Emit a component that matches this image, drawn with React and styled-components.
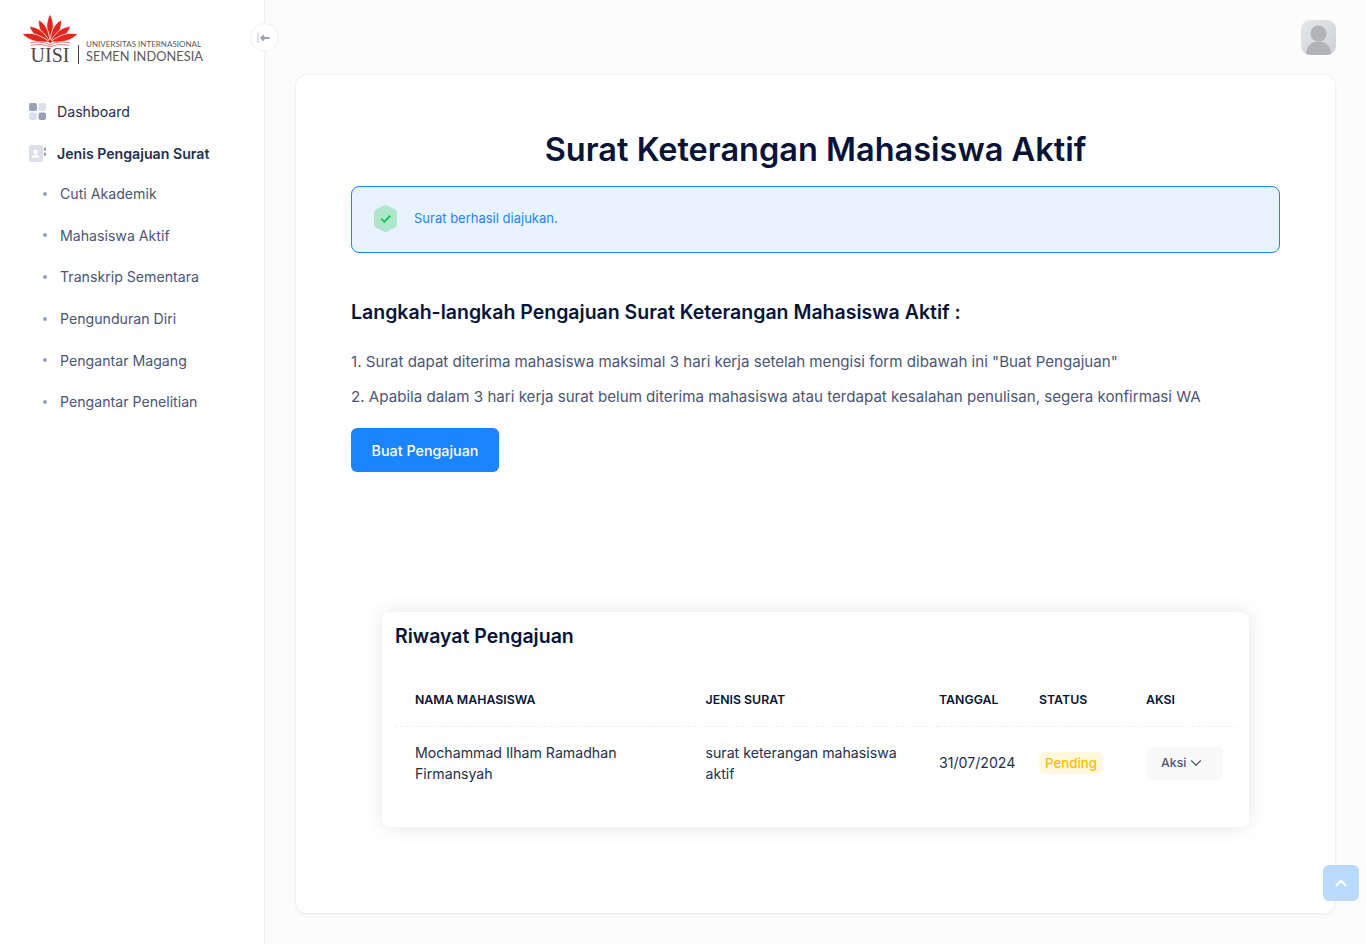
import React from "react"
import styled, { createGlobalStyle } from "styled-components"
import { ChevronDown, ChevronUp } from "lucide-react"

const GlobalStyle = createGlobalStyle`
  * { box-sizing: border-box; }
  html, body { margin: 0; padding: 0; }
  body {
    font-family: Inter, "Liberation Sans", sans-serif;
    background: #fcfcfc;
    color: #071437;
    overflow: hidden;
  }
`

const Page = styled.div`
  display: flex;
  height: 944px;
`

const Sidebar = styled.aside`
  position: relative;
  flex: 0 0 265px;
  background: #fff;
  border-right: 1px solid #f1f1f4;
`

const LogoWrap = styled.div`
  display: flex;
  align-items: flex-end;
  height: 74px;
  padding: 14px 0 10px 22px;
`

const LogoMark = styled.div`
  display: flex;
  flex-direction: column;
  align-items: center;
  width: 56px;
`

const LogoInitials = styled.span`
  font-family: "Liberation Serif", serif;
  font-size: 20px;
  line-height: 17px;
  color: #4b4b4b;
  margin-top: 0;
`

const LogoDivider = styled.span`
  width: 1px;
  height: 19px;
  margin: 0 7px 0 0;
  background: #444;
`

const LogoText = styled.div`
  display: flex;
  flex-direction: column;
  font-family: Lato, sans-serif;
  color: #5a5a5a;
  white-space: nowrap;
`

const LogoSmall = styled.span`
  font-size: 8px;
  line-height: 9px;
  letter-spacing: 0.02px;
`

const LogoBig = styled.span`
  font-size: 12.8px;
  line-height: 15px;
  letter-spacing: 0.05px;
`

const Toggle = styled.button`
  position: absolute;
  top: 23px;
  left: 250px;
  width: 29px;
  height: 29px;
  padding: 0;
  display: flex;
  align-items: center;
  justify-content: center;
  background: #fff;
  border: 1px solid #f1f1f4;
  border-radius: 50%;
`

const Nav = styled.nav`
  display: flex;
  flex-direction: column;
  padding-top: 16px;
`

const NavItem = styled.div`
  display: flex;
  align-items: center;
  gap: 11px;
  height: 42px;
  padding-left: 29px;
  font-size: 14.15px;
  font-weight: ${(p) => (p.$active ? 600 : 400)};
  color: ${(p) => (p.$active ? "#252f4a" : "#252f4a")};
`

const SubItem = styled.div`
  display: flex;
  align-items: center;
  height: 41.6px;
  padding-left: 43px;
  font-size: 14.15px;
  color: #4b5675;
  &::before {
    content: "";
    width: 4px;
    height: 4px;
    margin-right: 13px;
    border-radius: 50%;
    background: #99a1b7;
  }
`

const SubList = styled.div`
  display: flex;
  flex-direction: column;
  margin-top: -1px;
`

const Main = styled.main`
  flex: 1;
  display: flex;
  flex-direction: column;
  padding: 0 30px 30px;
  min-width: 0;
`

const Header = styled.header`
  display: flex;
  justify-content: flex-end;
  align-items: flex-start;
  height: 74px;
  padding-top: 20px;
`

const Avatar = styled.div`
  width: 35px;
  height: 35px;
  border-radius: 9px;
  overflow: hidden;
  background: linear-gradient(135deg, #e6e7e9, #cfd0d3);
`

const Card = styled.section`
  flex: 1;
  background: #fff;
  border: 1px solid #f1f1f4;
  border-radius: 12px;
  box-shadow: 0 3px 4px rgba(0, 0, 0, 0.03);
  padding: 0 55px;
`

const Title = styled.h1`
  margin: 54px 0 15px;
  font-size: 32.5px;
  line-height: 42px;
  font-weight: 600;
  text-align: center;
  color: #071437;
`

const Alert = styled.div`
  display: flex;
  align-items: center;
  gap: 17px;
  height: 67px;
  padding: 0 0 3px 22px;
  background: #e9f3ff;
  border: 1px solid #1b84ff;
  border-radius: 8px;
  font-size: 13px;
  color: #1b84ff;
`

const Heading = styled.h3`
  margin: 46px 0 0;
  font-size: 19.5px;
  line-height: 26px;
  font-weight: 600;
  color: #071437;
`

const Step = styled.p`
  margin: ${(p) => (p.$first ? "26px" : "13px")} 0 0;
  font-size: 15.12px;
  line-height: 22px;
  color: #4b5675;
`

const PrimaryButton = styled.button`
  display: block;
  margin-top: 20px;
  width: 148px;
  height: 44px;
  background: #1b84ff;
  color: #fff;
  border: 0;
  border-radius: 6px;
  font: 500 14.3px Inter, sans-serif;
`

const HistoryCard = styled.div`
  margin: 140px 31px 0;
  height: 215px;
  padding: 0 13px;
  background: #fff;
  border-radius: 8px;
  box-shadow: 0 0 20px rgba(0, 0, 0, 0.1);
`

const HistoryTitle = styled.h4`
  margin: 0;
  padding-top: 11px;
  font-size: 19.5px;
  line-height: 26px;
  font-weight: 600;
  color: #071437;
`

const Table = styled.table`
  width: 841px;
  margin-top: 24px;
  border-collapse: collapse;
  table-layout: fixed;
`

const Th = styled.th`
  width: ${(p) => p.$w}px;
  height: 53px;
  padding: 0 0 0 ${(p) => p.$pad || 0}px;
  text-align: left;
  font-size: 12.35px;
  font-weight: 600;
  text-transform: uppercase;
  color: #071437;
  border-bottom: 1px dashed #f1f1f4;
`

const Td = styled.td`
  padding: 15px ${(p) => p.$padRight || 0}px 15px ${(p) => p.$pad || 0}px;
  font-size: 14.15px;
  line-height: 21px;
  vertical-align: middle;
  color: #252f4a;
`

const Badge = styled.span`
  display: inline-block;
  padding: 0 6px;
  height: 22px;
  line-height: 22px;
  background: #fff8dd;
  border-radius: 6px;
  color: #f6c000;
  font-size: 13.3px;
  font-weight: 500;
`

const ActionButton = styled.div`
  display: flex;
  align-items: center;
  gap: 1px;
  width: 77px;
  height: 34px;
  padding-left: 15px;
  background: #f9f9f9;
  border-radius: 6px;
  font-size: 12.35px;
  font-weight: 500;
  color: #4b5675;
`

const ScrollTop = styled.div`
  position: fixed;
  right: 7px;
  bottom: 43px;
  width: 36px;
  height: 36px;
  display: flex;
  align-items: center;
  justify-content: center;
  background: #bbdaff;
  border-radius: 6px;
  color: #fff;
`

// angle in degrees, length and width of one lotus petal, base at 28,28
const petals = [
  [0, 28, 8.5],
  [-27, 25, 9],
  [27, 25, 9],
  [-53, 26, 9.5],
  [53, 26, 9.5],
  [-74, 29, 9],
  [74, 29, 9],
]

const FlowerLogo = () => (
  <svg width="56" height="33" viewBox="0 0 56 33">
    {petals.map(([a, l, w]) => (
      <path
        key={a}
        d={`M28 28 C${28 - w / 2} ${28 - l * 0.45} ${28 - w / 2} ${28 - l * 0.7} 28 ${28 - l} C${28 + w / 2} ${28 - l * 0.7} ${28 + w / 2} ${28 - l * 0.45} 28 28Z`}
        fill="#e1261c"
        stroke="#fff"
        strokeWidth="0.7"
        transform={`rotate(${a} 28 28)`}
      />
    ))}
    <path d="M26 27.500 28 25l2 2.500-2 2z" fill="#e1261c" />
    <path d="M8 29 Q20 26 28 31 Q36 26 48 29" fill="none" stroke="#ea7d76" strokeWidth="1" />
    <path d="M9 31.500 Q20 29 28 33 Q36 29 47 31.500" fill="none" stroke="#ea7d76" strokeWidth="1" />
  </svg>
)

const CollapseIcon = () => (
  <svg width="16" height="14" viewBox="0 0 16 14" fill="none">
    <path d="M1 2v10" stroke="#c4cada" strokeWidth="1.2" />
    <path d="M12.500 7H4.500M7 4.500 4.200 7 7 9.500" stroke="#99a1b7" strokeWidth="1.8" />
  </svg>
)

const DashboardIcon = () => (
  <svg width="17" height="17" viewBox="0 0 17 17" style={{ flexShrink: 0 }}>
    <rect x="0" y="0" width="8" height="8" rx="2" fill="#99a1b7" />
    <rect x="9.5" y="0" width="7.500" height="8" rx="2" fill="#dbdfe9" />
    <rect x="0" y="9.5" width="8" height="7.500" rx="2" fill="#dbdfe9" />
    <rect x="9.5" y="9.5" width="7.500" height="7.500" rx="2" fill="#99a1b7" />
  </svg>
)

const ContactIcon = () => (
  <svg width="17" height="17" viewBox="0 0 17 17" style={{ flexShrink: 0 }}>
    <rect x="0" y="0" width="14" height="17" rx="2.500" fill="#dbdfe9" />
    <circle cx="6.500" cy="6.800" r="2.200" fill="#fff" />
    <path d="M2.800 12.800c0-2.200 1.700-3.200 3.700-3.200s3.700 1 3.700 3.200z" fill="#fff" />
    <rect x="14.800" y="2.500" width="2.200" height="3.600" rx="1" fill="#99a1b7" />
    <rect x="14.800" y="7.400" width="2.200" height="3.600" rx="1" fill="#99a1b7" />
  </svg>
)

const ShieldIcon = () => (
  <svg width="23" height="29" viewBox="0 0 24 29" style={{ flexShrink: 0 }}>
    <path
      d="M10.400.8 1.600 5.300C.6 5.800 0 6.800 0 7.900v13.200c0 1.100.6 2.100 1.600 2.600l8.800 4.500c1 .5 2.200.5 3.200 0l8.800-4.500c1-.5 1.600-1.500 1.600-2.600V7.900c0-1.100-.6-2.100-1.600-2.600L13.600.8c-1-.5-2.200-.5-3.200 0z"
      fill="#aee6cb"
    />
    <path d="M7.500 14.600 10.800 18l6-6.400" fill="none" stroke="#17c653" strokeWidth="2" />
  </svg>
)

const AvatarIcon = () => (
  <svg width="35" height="35" viewBox="0 0 35 35">
    <circle cx="17.500" cy="13.500" r="8" fill="#b2b3b6" />
    <path d="M5 35c0-9 5-13.500 12.500-13.500S30 26 30 35z" fill="#b2b3b6" />
  </svg>
)

const subItems = [
  "Cuti Akademik",
  "Mahasiswa Aktif",
  "Transkrip Sementara",
  "Pengunduran Diri",
  "Pengantar Magang",
  "Pengantar Penelitian",
]

const App = () => {
  return (
    <Page>
      <GlobalStyle />
      <Sidebar>
        <LogoWrap>
          <LogoMark>
            <FlowerLogo />
            <LogoInitials>UISI</LogoInitials>
          </LogoMark>
          <LogoDivider />
          <LogoText>
            <LogoSmall>UNIVERSITAS INTERNASIONAL</LogoSmall>
            <LogoBig>SEMEN INDONESIA</LogoBig>
          </LogoText>
        </LogoWrap>
        <Toggle>
          <CollapseIcon />
        </Toggle>
        <Nav>
          <NavItem>
            <DashboardIcon />
            Dashboard
          </NavItem>
          <NavItem $active>
            <ContactIcon />
            Jenis Pengajuan Surat
          </NavItem>
          <SubList>
            {subItems.map((item) => (
              <SubItem key={item}>{item}</SubItem>
            ))}
          </SubList>
        </Nav>
      </Sidebar>
      <Main>
        <Header>
          <Avatar>
            <AvatarIcon />
          </Avatar>
        </Header>
        <Card>
          <Title>Surat Keterangan Mahasiswa Aktif</Title>
          <Alert>
            <ShieldIcon />
            Surat berhasil diajukan.
          </Alert>
          <Heading>Langkah-langkah Pengajuan Surat Keterangan Mahasiswa Aktif :</Heading>
          <Step $first>
            1. Surat dapat diterima mahasiswa maksimal 3 hari kerja setelah mengisi form dibawah ini "Buat Pengajuan"
          </Step>
          <Step>
            2. Apabila dalam 3 hari kerja surat belum diterima mahasiswa atau terdapat kesalahan penulisan, segera konfirmasi WA
          </Step>
          <PrimaryButton>Buat Pengajuan</PrimaryButton>
          <HistoryCard>
            <HistoryTitle>Riwayat Pengajuan</HistoryTitle>
            <Table>
              <thead>
                <tr>
                  <Th $w={310.5} $pad={20}>Nama Mahasiswa</Th>
                  <Th $w={233.5}>Jenis Surat</Th>
                  <Th $w={100}>Tanggal</Th>
                  <Th $w={107}>Status</Th>
                  <Th $w={90}>Aksi</Th>
                </tr>
              </thead>
              <tbody>
                <tr>
                  <Td $pad={20} $padRight={50}>Mochammad Ilham Ramadhan Firmansyah</Td>
                  <Td $padRight={20}>surat keterangan mahasiswa aktif</Td>
                  <Td>31/07/2024</Td>
                  <Td><Badge>Pending</Badge></Td>
                  <Td>
                    <ActionButton>
                      Aksi
                      <ChevronDown size={18} strokeWidth={1.5} />
                    </ActionButton>
                  </Td>
                </tr>
              </tbody>
            </Table>
          </HistoryCard>
        </Card>
      </Main>
      <ScrollTop>
        <ChevronUp size={18} strokeWidth={3} />
      </ScrollTop>
    </Page>
  )
}

export default App
